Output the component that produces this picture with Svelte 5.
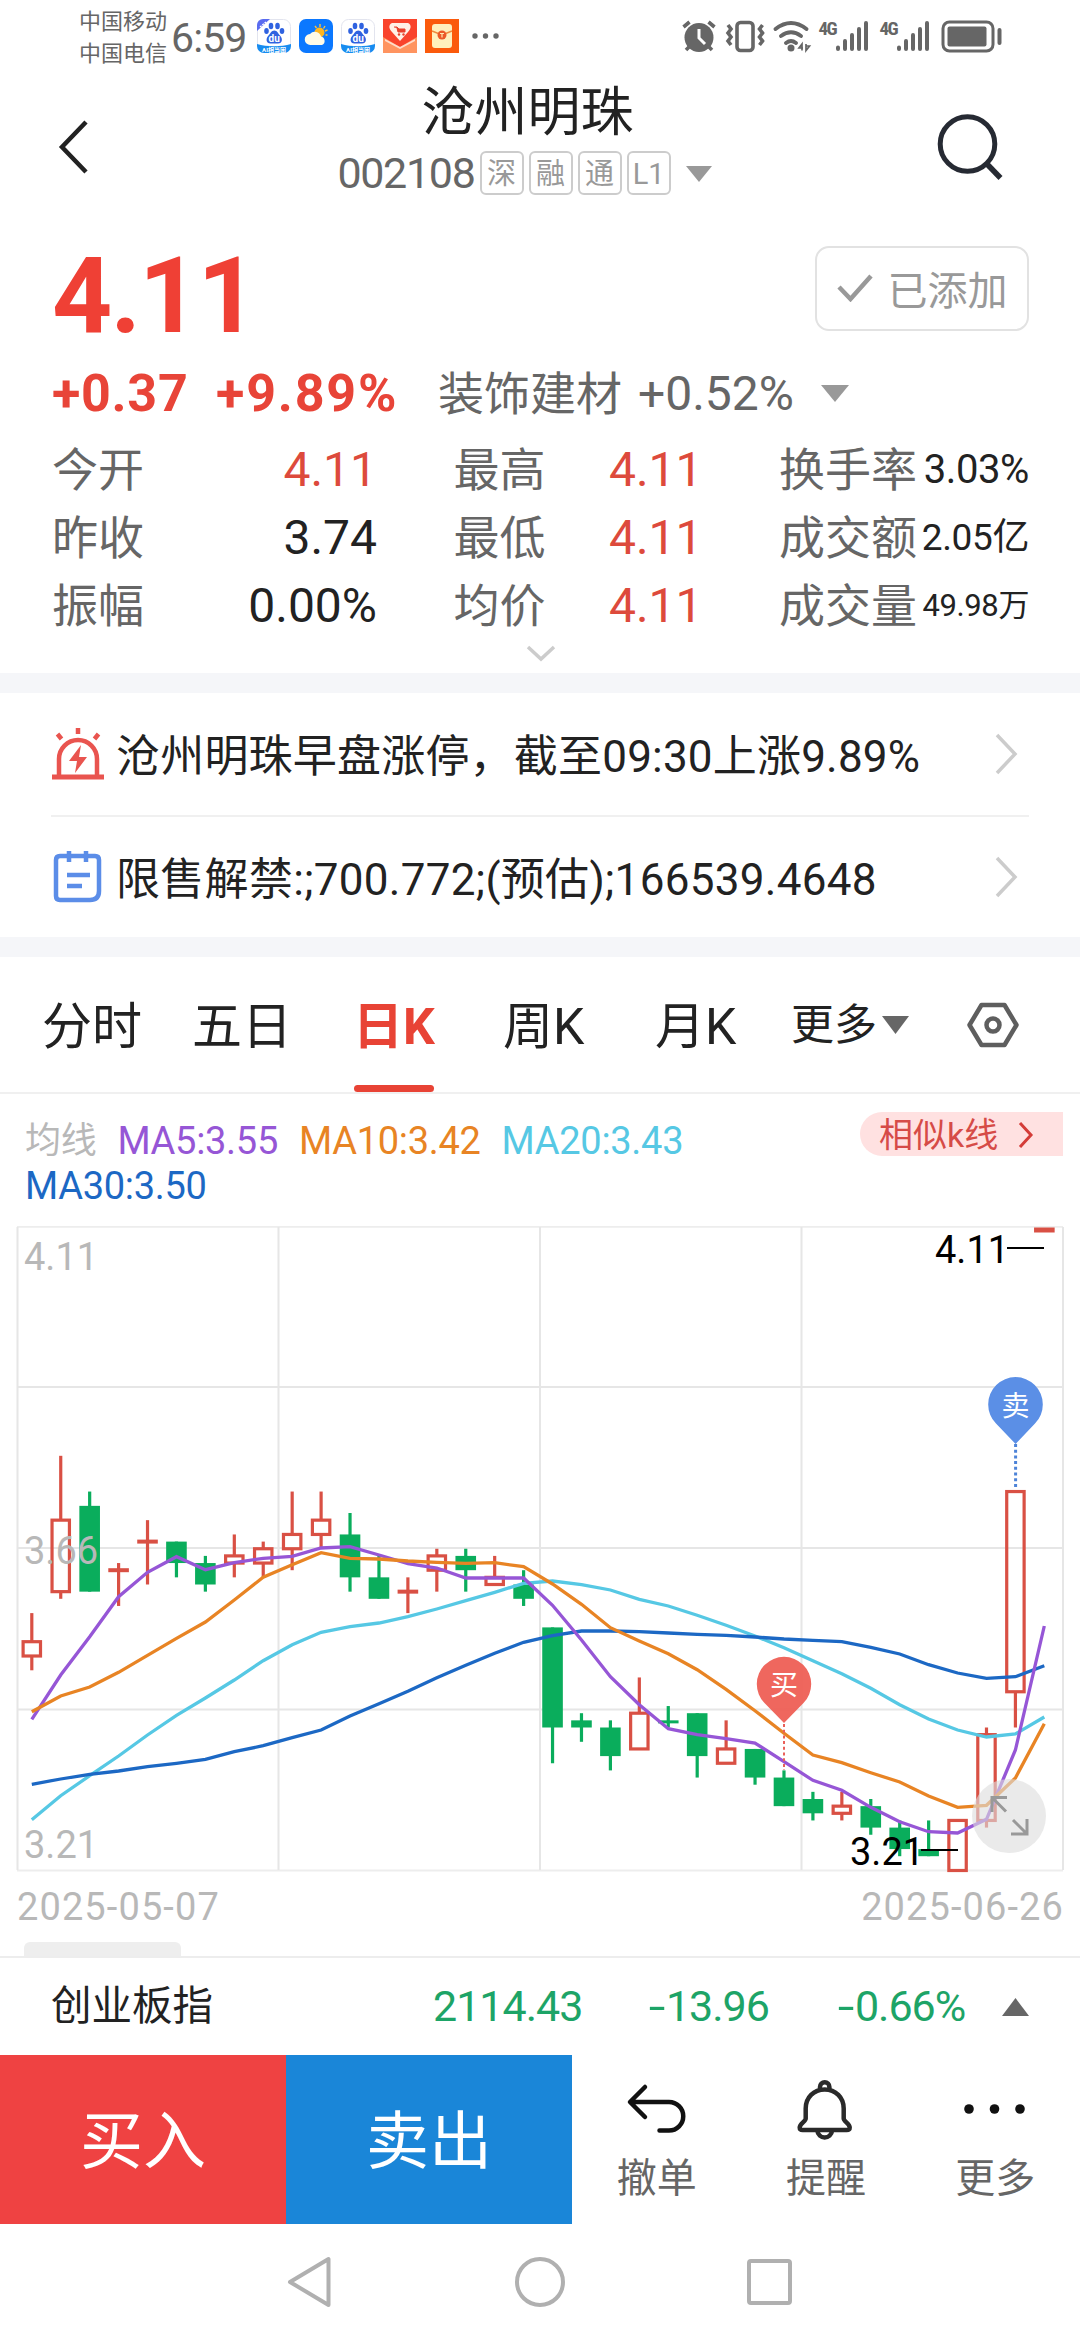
<script lang="ts">
  type Candle = { open: number; close: number; high: number; low: number };

  const badges = ['深', '融', '通', 'L1'];

  const stats = [
    { label: '今开', value: '4.11', tone: 'up' },
    { label: '最高', value: '4.11', tone: 'up' },
    { label: '换手率', value: '3.03%', tone: 's41' },
    { label: '昨收', value: '3.74', tone: '' },
    { label: '最低', value: '4.11', tone: 'up' },
    { label: '成交额', value: '2.05亿', tone: 's37' },
    { label: '振幅', value: '0.00%', tone: '' },
    { label: '均价', value: '4.11', tone: 'up' },
    { label: '成交量', value: '49.98万', tone: 's31' }
  ];

  const tabs = ['分时', '五日', '日K', '周K', '月K'];
  let activeTab = $state('日K');

  const legend = [
    { text: 'MA5:3.55', color: '#9656d6' },
    { text: 'MA10:3.42', color: '#e88424' },
    { text: 'MA20:3.43', color: '#56c8e4' },
    { text: 'MA30:3.50', color: '#1c68c4' }
  ];

  // open, close, high, low
  const candles: Candle[] = [
    [3.51, 3.53, 3.57, 3.49],
    [3.6, 3.7, 3.79, 3.59],
    [3.72, 3.6, 3.74, 3.6],
    [3.63, 3.63, 3.64, 3.58],
    [3.67, 3.67, 3.7, 3.61],
    [3.67, 3.64, 3.67, 3.62],
    [3.64, 3.61, 3.65, 3.6],
    [3.64, 3.65, 3.68, 3.62],
    [3.64, 3.66, 3.67, 3.62],
    [3.66, 3.68, 3.74, 3.63],
    [3.68, 3.7, 3.74, 3.66],
    [3.68, 3.62, 3.71, 3.6],
    [3.62, 3.59, 3.65, 3.59],
    [3.6, 3.6, 3.62, 3.57],
    [3.63, 3.65, 3.66, 3.6],
    [3.65, 3.63, 3.66, 3.6],
    [3.61, 3.62, 3.65, 3.61],
    [3.61, 3.59, 3.63, 3.58],
    [3.55, 3.41, 3.55, 3.36],
    [3.42, 3.41, 3.43, 3.39],
    [3.41, 3.37, 3.42, 3.35],
    [3.38, 3.43, 3.48, 3.38],
    [3.42, 3.419, 3.44, 3.41],
    [3.43, 3.37, 3.43, 3.34],
    [3.36, 3.38, 3.42, 3.36],
    [3.38, 3.34, 3.38, 3.33],
    [3.34, 3.3, 3.35, 3.3],
    [3.31, 3.29, 3.32, 3.28],
    [3.29, 3.3, 3.32, 3.28],
    [3.3, 3.27, 3.31, 3.26],
    [3.27, 3.24, 3.28, 3.23],
    [3.24, 3.23, 3.28, 3.23],
    [3.21, 3.28, 3.28, 3.21],
    [3.28, 3.4, 3.41, 3.27],
    [3.46, 3.74, 3.74, 3.41],
    [4.11, 4.11, 4.11, 4.11]
  ].map(([open, close, high, low]) => ({ open, close, high, low }));

  const lines = [
    {
      color: '#56c8e4',
      ys: [593.7, 569.7, 549.7, 530, 509, 489.3, 472, 454, 434.7, 418.7, 406.3, 400.7, 397, 390.7, 383, 374.7, 366.3, 357.3, 355, 358.7, 364, 373.3, 380, 389.3, 399.3, 410, 421.7, 434.7, 447.7, 462.3, 478.7, 493, 504, 511, 508, 491]
    },
    {
      color: '#1c68c4',
      ys: [558.3, 553, 548.3, 545, 540.7, 537.3, 533.3, 525.7, 519.7, 511.7, 504, 490, 477.7, 465.3, 451.7, 439.3, 427.3, 416.3, 409.7, 405, 405, 405.7, 407, 408.3, 409.3, 411, 413, 414.3, 415.7, 421.3, 428, 438.7, 447, 452.3, 450.7, 439.7]
    },
    {
      color: '#9656d6',
      ys: [493.3, 449, 410.7, 370.7, 346.3, 330.7, 343.7, 336.7, 332.3, 330.3, 322, 320.7, 329, 337.7, 342, 352, 352, 352, 379.3, 414, 450.7, 478.7, 502.7, 508.7, 512.7, 517, 535.7, 554.3, 564.3, 581.3, 595.7, 605.7, 607, 593.3, 524, 400]
    },
    {
      color: '#e88424',
      ys: [485.7, 470, 461, 446.3, 429.3, 412.3, 396, 374, 351.3, 338.7, 326.7, 332.3, 333, 335, 336.3, 337.3, 336.7, 340.7, 358, 378.3, 401.7, 415, 427.7, 443.7, 463.3, 484.7, 507.3, 529, 536.7, 546.7, 556, 570, 581.3, 579.3, 552, 497.7]
    }
  ];

  const HEIGHT = 644.5;
  const BODY = 20.6;
  const x = (i: number) => 31.8 + i * 28.93;
  const y = (price: number) => HEIGHT - (price - 3.21) * 715;
  const points = (ys: number[]) => ys.map((v, i) => `${x(i).toFixed(1)},${v}`).join(' ');
</script>

<div class="page">
  <div class="status">
    <div class="carriers">
      <span>中国移动</span>
      <span>中国电信</span>
    </div>
    <span class="clock">6:59</span>
    <div class="apps">
      {#each [true, false] as ribbon, n}
        <svg width="34" height="34" viewBox="0 0 34 34">
          <rect x=".5" y=".5" width="33" height="33" rx="7" fill="#fff" stroke="#e2e4ee" />
          {#if ribbon}
            <path d="M0 12V6a6 6 0 0 1 6-6h7z" fill="#5a6cf0" />
            <path d="M3 8l6-5" stroke="#fff" stroke-width="1.4" stroke-dasharray="2 1" />
          {/if}
          <g fill="#2f62e0">
            <ellipse cx="9.500" cy="12" rx="2.300" ry="3" />
            <ellipse cx="14" cy="7" rx="2.300" ry="3.300" />
            <ellipse cx="20.500" cy="7" rx="2.300" ry="3.300" />
            <ellipse cx="25" cy="12" rx="2.300" ry="3" />
            <path d="M17.300 11.500c3 0 3.700 3 5.700 5 3 3 2.500 8-2 8h-7.500c-4.500 0-5-5-2-8 2-2 2.800-5 5.800-5z" />
          </g>
          <text x="17.200" y="23" class="du">du</text>
          <path d="M0 25c10 3 24 3 34 0v2a7 7 0 0 1-7 7H7a7 7 0 0 1-7-7z" fill="#178cf0" />
          <text x="17" y="33" class="ai">AI相当困</text>
        </svg>
        {#if n === 0}
          <svg width="34" height="34" viewBox="0 0 34 34">
            <rect width="34" height="34" rx="7" fill="#0b78ff" />
            <path d="M21 5v3M26 7l-1.500 2.500M28.500 11l-2.500 1M16 7l1.500 2M28.500 16h-2" stroke="#ffc23a" stroke-width="1.400" />
            <circle cx="20.500" cy="13.500" r="5" fill="#ffb61f" />
            <path d="M11.500 26a5.500 5.500 0 0 1-.5-11 6.500 6.500 0 0 1 11 2.500 4.500 4.500 0 0 1 1 8.500z" fill="#fffbe8" />
          </svg>
        {/if}
      {/each}
      <svg width="34" height="34" viewBox="0 0 34 34">
        <rect width="34" height="34" fill="#f9432c" />
        <path d="M0 18l17 10 17-10v16H0z" fill="#ff9460" />
        <path d="M2 20l15 8 15-8v2l-15 8-15-8z" fill="#ffdccb" />
        <path d="M9 4h16c4 2 3 6 0 9l-8 9-8-9c-3-3-4-7 0-9z" fill="#fff0e6" />
        <path d="M11 8h3l2 2h6v3h-7l-1-4" fill="#e8402c" stroke="#e8402c" />
        <circle cx="16" cy="15.500" r="1.200" fill="#e8402c" />
        <circle cx="20.500" cy="15.500" r="1.200" fill="#e8402c" />
      </svg>
      <svg width="34" height="34" viewBox="0 0 34 34">
        <rect width="34" height="34" fill="#fb5a0c" />
        <rect x="7" y="5" width="20" height="24" rx="3" fill="#fff0bd" />
        <path d="M7 12l10 4 10-4" fill="none" stroke="#f08a3c" stroke-width="1.500" />
        <circle cx="17" cy="16" r="4.500" fill="#ec5a28" />
        <path d="M15 14.500h4M17 14.500v4" stroke="#ffe9b0" stroke-width="1.200" />
      </svg>
    </div>
    <svg class="more" width="28" height="34" viewBox="0 0 28 34" fill="#666">
      <circle cx="4" cy="17" r="2.700" /><circle cx="14.500" cy="17" r="2.700" /><circle cx="25" cy="17" r="2.700" />
    </svg>

    <svg class="indicators" width="320" height="36" viewBox="682 18 320 36" fill="none" stroke="#666">
      <circle cx="699" cy="37.500" r="14.500" fill="#666" stroke="none" />
      <path d="M699 29v9l6 6" stroke="#fff" stroke-width="3" />
      <path d="M683.500 27l6-5M714.500 27l-6-5M686 50l4-4M712 50l-4-4" stroke-width="3.600" />
      <rect x="737" y="22.500" width="16" height="28" rx="3.500" stroke-width="3.600" />
      <path d="M728 25l3 4-3 4 3 4-3 4 3 4M762.500 25l-3 4 3 4-3 4 3 4-3 4" stroke-width="3.600" />
      <g stroke-linecap="round" stroke-width="3.800">
        <path d="M775.500 29q15.500-12 31 0M781 36q10-7.500 20 0M786 43q5-4 10 0" />
      </g>
      <circle cx="791" cy="48" r="3.500" fill="#666" stroke="none" />
      <path d="M802 50.500v-6.500l-3 4h4M806 44v6.500l3.500-4.500h-4" stroke-width="1.700" />
      <g stroke-width="4" stroke-linecap="round">
        {#each [0, 61] as dx}
          <path d="M{838 + dx} 47.500v1.500M{845 + dx} 41v8M{852 + dx} 35v14M{859 + dx} 29v20M{866 + dx} 23v26" />
        {/each}
      </g>
      <g class="net">
        <text x="818.500" y="35">4G</text>
        <text x="879.500" y="35">4G</text>
      </g>
      <rect x="943" y="22" width="50" height="29" rx="6.500" stroke-width="3" />
      <rect x="947.500" y="26.500" width="39" height="20" rx="2" fill="#666" stroke="none" />
      <path d="M999.500 30v13" stroke-width="4" stroke-linecap="round" />
    </svg>
  </div>

  <header>
    <svg class="back" width="40" height="60" viewBox="0 0 40 60">
      <path d="M35 5L11 30l24 25" fill="none" stroke="#222" stroke-width="4.500" />
    </svg>
    <div class="heading">
      <h1>沧州明珠</h1>
      <div class="code">
        <span class="number">002108</span>
        {#each badges as badge}
          <span class="badge">{badge}</span>
        {/each}
        <svg class="caret" width="28" height="17" viewBox="0 0 28 17"><path d="M1 1h26L14 17z" fill="#999" /></svg>
      </div>
    </div>
    <svg class="search" width="70" height="70" viewBox="0 0 70 70" fill="none" stroke="#262a33">
      <circle cx="31.500" cy="33" r="27.300" stroke-width="5" />
      <path d="M50.500 52.500l14 14.500" stroke-width="5.500" />
    </svg>
  </header>

  <section class="quote">
    <div class="price-row">
      <span class="price">4.11</span>
      <button class="added">
        <svg width="36" height="28" viewBox="0 0 36 28">
          <path d="M2 13l11.500 12L34 2" fill="none" stroke="#999" stroke-width="4.500" />
        </svg>
        已添加
      </button>
    </div>
    <div class="change-row">
      <strong>+0.37</strong>
      <strong class="pct">+9.89%</strong>
      <span class="sector">装饰建材</span>
      <span class="sector-pct">+0.52%</span>
      <svg width="28" height="18" viewBox="0 0 28 18"><path d="M0 0h28L14 17z" fill="#999" /></svg>
    </div>
    <div class="stats">
      {#each stats as item}
        <div class="stat">
          <span class="label">{item.label}</span>
          <span class="value {item.tone}">{item.value}</span>
        </div>
      {/each}
    </div>
    <svg class="expand" width="30" height="17" viewBox="0 0 30 17">
      <path d="M2 2l13 12L28 2" fill="none" stroke="#ccc" stroke-width="3.500" />
    </svg>
  </section>

  <section class="alerts">
    <div class="alert">
      <svg class="lead" width="54" height="54" viewBox="0 0 54 54" fill="none" stroke="#e9544f">
        <path d="M27 1v6M6.500 7l4 5M47.500 7l-4 5" stroke-width="4.500" />
        <path d="M8 49V32a19 19 0 0 1 38 0v17" stroke-width="4.500" />
        <path d="M1 50h52" stroke-width="5" />
        <path d="M30 18l-12 16h8l-2 12 12-16h-8z" fill="#e9544f" stroke="none" />
      </svg>
      <span class="alert-text">沧州明珠早盘涨停，截至09:30上涨9.89%</span>
      <svg width="24" height="44" viewBox="0 0 24 44"><path d="M3 3l18 19L3 41" fill="none" stroke="#ccc" stroke-width="3.500" /></svg>
    </div>
    <div class="alert">
      <svg class="lead" width="54" height="54" viewBox="0 0 54 54" fill="none" stroke="#5b8de8" stroke-width="4.500">
        <path d="M9 6h35q4 0 4 4v31q0 9-9 9H9q-4 0-4-4V10q0-4 4-4z" stroke-linejoin="round" />
        <path d="M18 1v11M35 1v11M16 25h23M16 36h15" />
      </svg>
      <span class="alert-text second-text">限售解禁:;700.772;(预估);166539.4648</span>
      <svg width="24" height="44" viewBox="0 0 24 44"><path d="M3 3l18 19L3 41" fill="none" stroke="#ccc" stroke-width="3.500" /></svg>
    </div>
  </section>

  <nav class="tabs">
    {#each tabs as tab}
      <button class="tab" class:active={tab === activeTab} onclick={() => (activeTab = tab)}>{tab}</button>
    {/each}
    <button class="tab more-tab">
      更多
      <svg width="27" height="18" viewBox="0 0 27 18"><path d="M0 0h27L13.500 18z" fill="#666" /></svg>
    </button>
    <svg class="gear" width="54" height="48" viewBox="0 0 54 48" fill="none" stroke="#5e5e5e" stroke-width="4.500">
      <path d="M15.500 4h23l12 20-12 20h-23l-12-20z" stroke-linejoin="round" />
      <circle cx="27" cy="24" r="6.500" />
    </svg>
  </nav>

  <section class="chart">
    <div class="legend">
      <div class="averages">
        <span class="name">均线</span>
        {#each legend as item}
          <span style="color: {item.color}">{item.text}</span>
        {/each}
      </div>
      <div class="similar">
        相似k线
        <svg width="16" height="28" viewBox="0 0 16 28"><path d="M2 2l11 12L2 26" fill="none" stroke="#d43c38" stroke-width="3" /></svg>
      </div>
    </div>

    <svg class="kline" width="1080" height="648" viewBox="0 0 1080 648">
      <g stroke="#e6e6e6" stroke-width="2">
        <path d="M17 .8H1063M17 {HEIGHT}H1063" stroke="#ededed" />
        <path d="M17 161H1063M17 322H1063M17 483.500H1063" />
        <path d="M17.500 1V644M278.500 1V644M540 1V644M801.500 1V644M1063 1V644" />
      </g>

      {#each candles as c, i}
        {@const top = y(Math.max(c.open, c.close))}
        {@const bottom = y(Math.min(c.open, c.close))}
        {#if c.close < c.open}
          <g fill="#0aad5c">
            <rect x={x(i) - 1.6} y={y(c.high)} width="3.2" height={y(c.low) - y(c.high)} />
            <rect x={x(i) - BODY / 2} y={top} width={BODY} height={Math.max(bottom - top, 3)} />
          </g>
        {:else}
          <g fill="none" stroke="#d95044" stroke-width="3.2">
            {#if c.high > Math.max(c.open, c.close)}
              <path d="M{x(i)} {y(c.high)}V{top}" />
            {/if}
            {#if c.low < Math.min(c.open, c.close)}
              <path d="M{x(i)} {bottom}V{y(c.low)}" />
            {/if}
            {#if c.open === c.close}
              <path d="M{x(i) - BODY / 2} {top + (i === 35 ? 3 : 0)}h{BODY}" stroke-width={i === 35 ? 5 : 4} />
            {:else}
              <rect x={x(i) - BODY / 2 + 1.6} y={top} width={BODY - 3.2} height={bottom - top} />
            {/if}
          </g>
        {/if}
      {/each}

      {#each lines as line}
        <polyline points={points(line.ys)} fill="none" stroke={line.color} stroke-width="3.3" />
      {/each}

      <g class="axis">
        <text x="24" y="44">4.11</text>
        <text x="24" y="338">3.66</text>
        <text x="24" y="632">3.21</text>
      </g>

      <g class="mark">
        <text x="935" y="37">4.11</text>
        <path d="M1007 22h37" />
        <text x="850" y="639">3.21</text>
        <path d="M921 624h37" />
      </g>

      <path d="M1015.600 218V263" stroke="#4d83d8" stroke-width="3" stroke-dasharray="3 2.700" />
      <path d="M1015.600 218L996 197.500A27.300 27.300 0 1 1 1035 197.500z" fill="#5b8fe6" />
      <text x="1015.600" y="190" class="pin">卖</text>

      <path d="M784 498V544" stroke="#e9605a" stroke-width="2" stroke-dasharray="3 2.700" />
      <path d="M784 497L764.500 477A27.200 27.200 0 1 1 803.500 477z" fill="#ee5b52" opacity=".93" />
      <text x="784" y="469" class="pin">买</text>

      <circle cx="1009" cy="590" r="37" fill="#ddd" opacity=".62" />
      <path d="M1007 571.500H992V586M992 571.500l14 14M1011 608H1027V593M1027 608l-14-14" fill="none" stroke="#999" stroke-width="3" />
    </svg>

    <div class="dates">
      <span>2025-05-07</span>
      <span>2025-06-26</span>
    </div>
    <div class="handle"></div>
  </section>

  <div class="index">
    <span class="index-name">创业板指</span>
    <span class="down last">2114.43</span>
    <span class="down diff"><i>-</i>13.96</span>
    <span class="down rate"><i>-</i>0.66%</span>
    <svg width="27" height="18" viewBox="0 0 27 18"><path d="M13.500 0L27 18H0z" fill="#666" /></svg>
  </div>

  <footer>
    <button class="trade buy">买入</button>
    <button class="trade sell">卖出</button>
    <div class="tool">
      <svg width="64" height="64" viewBox="0 0 64 64" fill="none" stroke="#111" stroke-width="4.500" stroke-linecap="round" stroke-linejoin="round">
        <path d="M20 11L5 26l15 15M6 26h38a14 14 0 0 1 0 28.500H34.500" />
      </svg>
      <span>撤单</span>
    </div>
    <div class="tool">
      <svg width="64" height="64" viewBox="0 0 64 64" fill="none" stroke="#2a2a2a" stroke-width="4.500" stroke-linejoin="round">
        <path d="M26 13v-2a4.700 4.700 0 0 1 9.400 0v2" />
        <path d="M30.700 13.500c-11 0-19 8-19 19v10c0 3-6 5-6 9q0 2.500 3 2.500h44q3 0 3-2.500c0-4-6-6-6-9v-10c0-11-8-19-19-19z" />
        <path d="M23.200 54c1 10 14 10 15 0" />
      </svg>
      <span>提醒</span>
    </div>
    <div class="tool">
      <svg width="70" height="64" viewBox="0 0 70 64" fill="#111">
        <circle cx="9" cy="33" r="4.800" /><circle cx="34.500" cy="33" r="4.800" /><circle cx="60" cy="33" r="4.800" />
      </svg>
      <span>更多</span>
    </div>
  </footer>

  <div class="navbar">
    <svg width="56" height="56" viewBox="0 0 56 56" fill="none" stroke="#b0b0b0" stroke-width="4" stroke-linejoin="round">
      <path d="M46.500 5v46L8 28z" />
    </svg>
    <svg width="56" height="56" viewBox="0 0 56 56" fill="none" stroke="#b0b0b0" stroke-width="4">
      <circle cx="28" cy="28" r="23" />
    </svg>
    <svg width="56" height="56" viewBox="0 0 56 56" fill="none" stroke="#b0b0b0" stroke-width="4">
      <rect x="7" y="7" width="41" height="42" rx="2" />
    </svg>
  </div>
</div>

<style>
  :global(body) {
    background: #fff;
  }

  .page {
    display: flex;
    flex-direction: column;
    width: 1080px;
    height: 2340px;
    overflow: hidden;
    background: #fff;
    color: #222;
    font-family: Roboto, 'Noto Sans CJK SC', sans-serif;
  }

  svg {
    display: block;
    flex: none;
  }

  button {
    border: 0;
    padding: 0;
    background: none;
    color: inherit;
    font-family: inherit;
  }

  .status {
    display: flex;
    align-items: center;
    box-sizing: border-box;
    height: 74px;
    padding: 0 78px 2px 79px;
    color: #666;
  }

  .carriers {
    display: flex;
    flex-direction: column;
    width: 92px;
    font-size: 22px;
    line-height: 32px;
    padding-top: 4px;
  }

  .clock {
    width: 86px;
    font-size: 41px;
    letter-spacing: -0.9px;
    line-height: 48px;
    padding-top: 4px;
  }

  .apps {
    display: flex;
    gap: 8px;
  }

  .du {
    font: 700 10px Roboto, sans-serif;
    fill: #fff;
    text-anchor: middle;
  }

  .ai {
    font: 700 6px Roboto, 'Noto Sans CJK SC', sans-serif;
    fill: #fff;
    text-anchor: middle;
  }

  .more {
    margin-left: 12px;
  }

  .indicators {
    margin-left: auto;
  }

  .net text {
    font: 700 19px 'Roboto Condensed', Roboto, sans-serif;
    letter-spacing: -1.5px;
    fill: #666;
    stroke: none;
  }

  header {
    display: flex;
    justify-content: space-between;
    height: 158px;
    padding: 0 75px 0 51px;
  }

  .back {
    margin-top: 43px;
  }

  .search {
    margin-top: 37px;
    margin-right: -1px;
  }

  .heading {
    display: flex;
    flex-direction: column;
    width: 750px;
    align-items: center;
  }

  h1 {
    margin: 7px 0 6px;
    font-size: 53px;
    font-weight: 400;
    line-height: 64px;
    padding-left: 28px;
  }

  .code {
    display: flex;
    align-items: center;
    gap: 5px;
    padding-left: 23px;
  }

  .number {
    color: #666;
    font-size: 43px;
    letter-spacing: -1.3px;
    line-height: 44px;
  }

  .badge {
    box-sizing: border-box;
    width: 44px;
    height: 44px;
    border: 2px solid #ccc;
    border-radius: 6px;
    color: #999;
    font-size: 29px;
    line-height: 42px;
    text-align: center;
  }

  .caret {
    margin-left: 9px;
  }

  .quote {
    display: flex;
    flex-direction: column;
    height: 441px;
    padding: 0 51px 0 52px;
    border-bottom: 20px solid #f5f6f9;
  }

  .price-row {
    display: flex;
    justify-content: space-between;
    align-items: flex-start;
    height: 122px;
    padding-top: 14px;
  }

  .price {
    padding-top: 2px;
    color: #ef4035;
    font-size: 105px;
    font-weight: 700;
    letter-spacing: -1.8px;
    line-height: 98px;
  }

  .added {
    display: flex;
    align-items: center;
    justify-content: center;
    gap: 15px;
    box-sizing: border-box;
    width: 214px;
    height: 85px;
    padding-bottom: 2px;
    border: 2px solid #e2e2e2;
    border-radius: 14px;
    color: #999;
    font-size: 40px;
  }

  .change-row {
    display: flex;
    align-items: center;
    height: 52px;
    line-height: 52px;
    color: #666;
  }

  strong {
    width: 164px;
    color: #e84438;
    font-size: 52px;
    letter-spacing: 0.7px;
  }

  .pct {
    width: 222px;
    letter-spacing: 1.8px;
  }

  .sector {
    width: 200px;
    font-size: 46px;
  }

  .sector-pct {
    width: 183px;
    font-size: 48px;
  }

  .stats {
    display: grid;
    grid-template-columns: 325px 249px 250px;
    justify-content: space-between;
    margin-top: 16px;
  }

  .stat {
    display: flex;
    justify-content: space-between;
    align-items: center;
    height: 68px;
    line-height: 68px;
  }

  .label {
    color: #666;
    font-size: 46px;
  }

  .value {
    font-size: 48px;
  }

  .up {
    color: #dd4a3c;
  }

  .s41 {
    font-size: 40px;
    letter-spacing: -0.4px;
  }

  .s37 {
    font-size: 37px;
    letter-spacing: -0.4px;
  }

  .s31 {
    font-size: 31px;
    letter-spacing: -0.4px;
  }

  .expand {
    margin: 5px auto 0;
  }

  .alerts {
    padding: 0 51px;
    border-bottom: 20px solid #f5f6f9;
  }

  .alert {
    display: flex;
    align-items: center;
    height: 122px;
  }

  .alert + .alert {
    height: 120px;
    border-top: 2px solid #f0f0f0;
  }

  .alert-text {
    flex: 1;
    padding: 0 0 3px 11px;
    font-size: 44px;
    letter-spacing: 0.2px;
  }

  .second-text {
    letter-spacing: 0.3px;
  }

  .alert > svg:last-child {
    margin-right: 11px;
  }

  .tabs {
    display: grid;
    grid-template-columns: 150px 161px 150px 152px 136px 175px 54px;
    align-items: center;
    height: 135px;
    padding-left: 42px;
    border-bottom: 2px solid #f0f0f0;
  }

  .tab {
    position: relative;
    justify-self: start;
    height: 135px;
    font-size: 50px;
    line-height: 140px;
  }

  .active {
    color: #e84335;
    font-weight: 700;
  }

  .active::after {
    content: '';
    position: absolute;
    left: 1px;
    right: 1px;
    bottom: 0;
    height: 7px;
    border-radius: 4px;
    background: #e84335;
  }

  .more-tab {
    display: flex;
    align-items: center;
    gap: 5px;
    font-size: 43px;
  }

  .chart {
    height: 862px;
    border-bottom: 2px solid #ededed;
  }

  .legend {
    display: flex;
    justify-content: space-between;
    height: 114px;
    padding: 18px 17px 0 25px;
    box-sizing: content-box;
  }

  .averages {
    display: flex;
    flex-wrap: wrap;
    column-gap: 21px;
    align-content: flex-start;
    width: 740px;
    padding-top: 7px;
    font-size: 38px;
    letter-spacing: -0.3px;
    line-height: 44.5px;
  }

  .name {
    color: #b8b8b8;
    font-size: 36px;
  }

  .similar {
    display: flex;
    align-items: center;
    gap: 20px;
    box-sizing: border-box;
    width: 203px;
    height: 44px;
    padding: 2px 0 0 19px;
    border-radius: 22px 0 0 22px;
    background: #ffe1e1;
    color: #d64b47;
    font-size: 34px;
    line-height: 44px;
  }

  .axis text {
    font-size: 38px;
    fill: #b8b8b8;
  }

  .mark text {
    font-size: 38px;
    fill: #000;
  }

  .mark path {
    stroke: #000;
    stroke-width: 2;
  }

  .pin {
    font-size: 28px;
    fill: #fff;
    text-anchor: middle;
  }

  .dates {
    display: flex;
    justify-content: space-between;
    padding: 11px 16px 0 17px;
    color: #b8b8b8;
    font-size: 38px;
    letter-spacing: 1.1px;
    line-height: 44px;
  }

  .handle {
    width: 157px;
    height: 14px;
    margin: 13px 0 0 24px;
    border-radius: 6px 6px 0 0;
    background: #eee;
  }

  .index {
    display: flex;
    align-items: center;
    height: 97px;
    padding: 0 51px;
    line-height: 97px;
    font-size: 43px;
  }

  .index-name {
    width: 382px;
    font-size: 40.5px;
  }

  .down {
    color: #1da467;
    letter-spacing: -1px;
  }

  .down i {
    display: inline-block;
    font-style: normal;
    transform: scaleX(1.4);
    margin-right: 4px;
  }

  .last {
    width: 218px;
  }

  .diff {
    width: 189px;
  }

  .rate {
    flex: 1;
  }

  footer {
    display: flex;
    height: 169px;
  }

  .trade {
    width: 286px;
    padding-bottom: 9px;
    color: #fff;
    font-size: 63px;
  }

  .buy {
    background: #ef4242;
  }

  .sell {
    background: #1a86d8;
  }

  .tool {
    display: flex;
    flex: 1;
    flex-direction: column;
    align-items: center;
    padding-top: 21px;
    color: #666;
    font-size: 40px;
    line-height: 48px;
  }

  .tool span {
    margin-top: 15px;
  }

  .navbar {
    display: flex;
    flex: 1;
    justify-content: center;
    align-items: center;
    gap: 174px;
  }
</style>
